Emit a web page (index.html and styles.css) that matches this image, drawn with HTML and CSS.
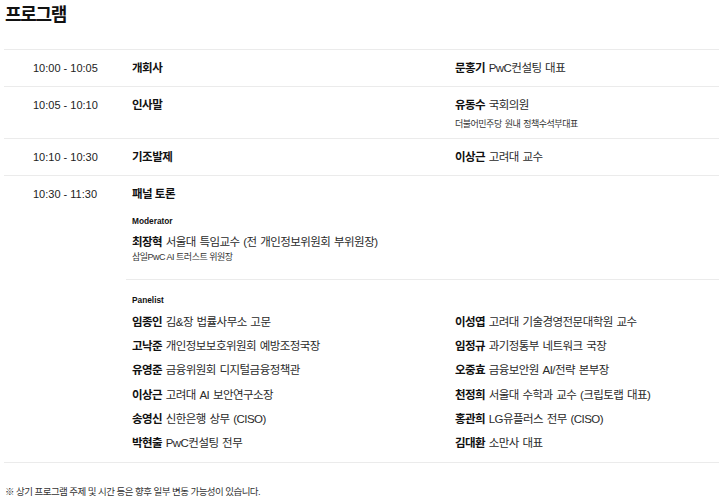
FILE: index.html
```html
<!DOCTYPE html>
<html lang="ko">
<head>
<meta charset="utf-8">
<title>프로그램</title>
<link rel="stylesheet" href="styles.css">
</head>
<body>
<div class="page">
  <h2 class="title">프로그램</h2>
  <div class="schedule">
    <div class="row">
      <div class="time">10:00 - 10:05</div>
      <div class="body session">
        <div class="topic">개회사</div>
        <div class="speaker"><b>문홍기</b> PwC컨설팅 대표</div>
      </div>
    </div>
    <div class="row">
      <div class="time">10:05 - 10:10</div>
      <div class="body session">
        <div class="topic">인사말</div>
        <div class="speaker">
          <div><b>유동수</b> 국회의원</div>
          <div class="sub">더불어민주당 원내 정책수석부대표</div>
        </div>
      </div>
    </div>
    <div class="row">
      <div class="time">10:10 - 10:30</div>
      <div class="body session">
        <div class="topic">기조발제</div>
        <div class="speaker"><b>이상근</b> 고려대 교수</div>
      </div>
    </div>
    <div class="row">
      <div class="time">10:30 - 11:30</div>
      <div class="body">
        <div class="topic">패널 토론</div>
        <div class="moderator">
          <div class="label">Moderator</div>
          <div class="person"><b>최장혁</b> 서울대 특임교수 (전 개인정보위원회 부위원장)</div>
          <div class="sub tight">삼일PwC AI 트러스트 위원장</div>
        </div>
        <div class="panelists">
          <div class="label">Panelist</div>
          <div class="grid">
            <div class="person"><b>임종인</b> 김&amp;장 법률사무소 고문</div>
            <div class="person"><b>이성엽</b> 고려대 기술경영전문대학원 교수</div>
            <div class="person"><b>고낙준</b> 개인정보보호위원회 예방조정국장</div>
            <div class="person"><b>임정규</b> 과기정통부 네트워크 국장</div>
            <div class="person"><b>유영준</b> 금융위원회 디지털금융정책관</div>
            <div class="person"><b>오중효</b> 금융보안원 AI/전략 본부장</div>
            <div class="person"><b>이상근</b> 고려대 AI 보안연구소장</div>
            <div class="person"><b>천정희</b> 서울대 수학과 교수 (크립토랩 대표)</div>
            <div class="person"><b>송영신</b> 신한은행 상무 (CISO)</div>
            <div class="person"><b>홍관희</b> LG유플러스 전무 (CISO)</div>
            <div class="person"><b>박현출</b> PwC컨설팅 전무</div>
            <div class="person"><b>김대환</b> 소만사 대표</div>
          </div>
        </div>
      </div>
    </div>
  </div>
  <p class="note">※ 상기 프로그램 주제 및 시간 등은 향후 일부 변동 가능성이 있습니다.</p>
</div>
</body>
</html>
```

FILE: styles.css
```css
html, body {
  margin: 0;
  padding: 0;
  background: #ffffff;
}
body {
  font-family: "Liberation Sans", "Noto Sans CJK KR", sans-serif;
  color: #222222;
}
.page {
  padding: 5px 0 0 4px;
}
.title {
  margin: 0 0 24px 1px;
  font-size: 18px;
  line-height: 20px;
  font-weight: 700;
  letter-spacing: -1.3px;
  color: #111111;
}
.schedule {
  border-bottom: 1px solid #ebebeb;
}
.row {
  display: grid;
  grid-template-columns: 122px 1fr;
  border-top: 1px solid #ebebeb;
  padding: 12px 0 11px;
}
.time {
  padding-left: 29px;
  font-size: 11px;
  line-height: 13px;
  color: #222222;
}
.session {
  display: grid;
  grid-template-columns: 329px 1fr;
}
.topic {
  padding-left: 6px;
  font-size: 11.5px;
  line-height: 13px;
  font-weight: 700;
  letter-spacing: -0.5px;
  color: #111111;
}
.speaker, .person {
  font-size: 11.5px;
  line-height: 13px;
  letter-spacing: -0.55px;
  word-spacing: 1px;
  color: #2a2a2a;
}
.speaker b, .person b {
  color: #111111;
  font-weight: 700;
}
.sub {
  margin: 7px 0 -2px;
  font-size: 9px;
  line-height: 10px;
  letter-spacing: -0.5px;
  color: #333333;
}
.sub.tight {
  margin: 3.5px 0 0;
}
.moderator {
  padding: 15px 0 17px 6px;
}
.label {
  font-size: 8.3px;
  line-height: 10px;
  font-weight: 700;
  color: #111111;
}
.moderator .person {
  margin-top: 9.5px;
}
.panelists {
  border-top: 1px solid #ebebeb;
  padding: 15px 0 1px 6px;
}
.grid {
  margin-top: 10px;
  display: grid;
  grid-template-columns: 323px 1fr;
  row-gap: 10.2px;
}
.grid .person {
  line-height: 14px;
}
.note {
  margin: 23px 0 0 1px;
  font-size: 9.5px;
  line-height: 12px;
  letter-spacing: -0.55px;
  color: #333333;
}
```
